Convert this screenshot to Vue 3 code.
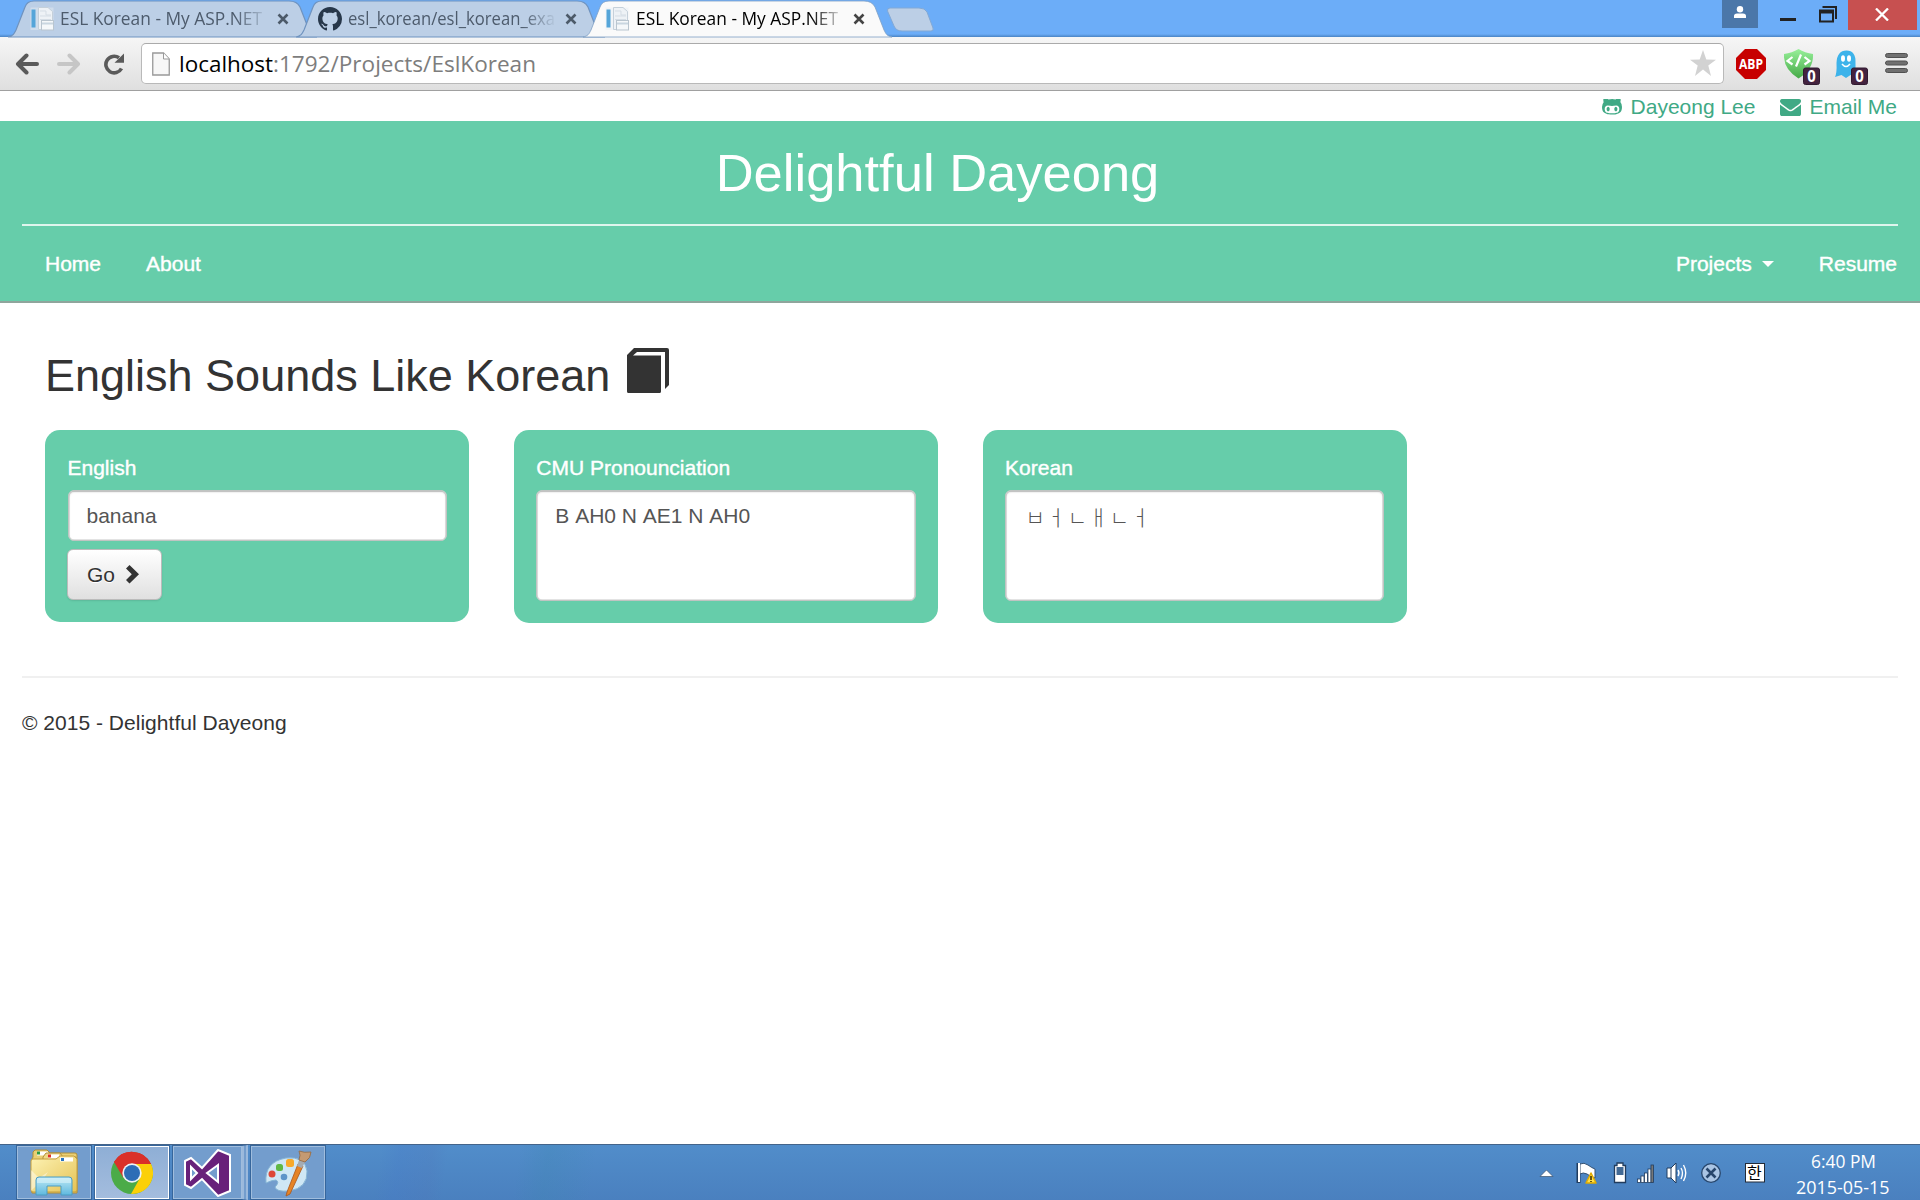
<script setup>
const tabs = [
  { title: 'ESL Korean - My ASP.NET', icon: 'page', active: false, width: 202 },
  { title: 'esl_korean/esl_korean_exa', icon: 'github', active: false, width: 207 },
  { title: 'ESL Korean - My ASP.NET', icon: 'page', active: true, width: 202 },
]
</script>

<template>
  <div class="screen">
    <div class="titlebar">
      <div class="tabs">
        <div v-for="(t, i) in tabs" :key="i" class="tab" :class="{ active: t.active }">
          <svg class="shape" width="310" height="38" viewBox="0 0 310 38">
            <path d="M0 37C5 36 6 34 8 30L17 7Q19 1 26 1H281Q289 1 292 7L301 30C303 34 304 36 309 37Z" />
          </svg>
          <svg v-if="t.icon === 'page'" class="fav" viewBox="0 0 24 24">
            <rect x="0.5" y="0.5" width="23" height="22.5" fill="#e6edf4" opacity=".45" />
            <rect x="1.5" y="2.5" width="4" height="18" fill="#55a5d9" />
            <path d="M8.500.5H18l4.500 4V22.500H8.500Z" fill="#eef2f6" stroke="#c5d0da" />
            <path d="M10 4h6v4h5M10 9h11M10 12.500h11" fill="none" stroke="#d5dde5" />
            <rect x="11.500" y="13.500" width="12" height="9.500" fill="#f5f8fa" stroke="#b9c5cf" />
            <path d="M12 16.500h11" stroke="#c9d6e0" stroke-width="2" />
          </svg>
          <svg v-else class="fav" viewBox="0 0 16 16">
            <path fill="#27374a" d="M8 0C3.580 0 0 3.580 0 8c0 3.540 2.290 6.530 5.470 7.590.4.070.55-.17.55-.38 0-.19-.01-.82-.01-1.490-2.010.37-2.530-.49-2.690-.94-.09-.23-.48-.94-.82-1.130-.28-.15-.68-.52-.01-.53.63-.01 1.080.58 1.230.82.72 1.210 1.870.87 2.330.66.07-.52.28-.87.51-1.070-1.780-.2-3.640-.89-3.640-3.950 0-.87.31-1.590.82-2.150-.08-.2-.36-1.020.08-2.120 0 0 .67-.21 2.200.82.64-.18 1.320-.27 2-.27s1.360.09 2 .27c1.530-1.040 2.200-.82 2.200-.82.44 1.100.16 1.920.08 2.120.51.56.82 1.270.82 2.150 0 3.070-1.870 3.750-3.650 3.950.29.25.54.73.54 1.480 0 1.070-.01 1.930-.01 2.200 0 .21.15.46.55.38A8.010 8.010 0 0016 8c0-4.420-3.580-8-8-8z" />
          </svg>
          <svg class="ttl" width="212" height="34">
            <text x="0" y="25" :textLength="t.width" lengthAdjust="spacingAndGlyphs">{{ t.title }}</text>
          </svg>
          <svg class="x" width="12" height="12"><path d="M1.500 1.500L10.500 10.500M10.500 1.500L1.500 10.500" /></svg>
        </div>
        <svg class="newtab" width="50" height="26" viewBox="0 0 50 26">
          <path d="M4 1H33Q39 1 41 5L47 21Q48 24 45 24H16Q10 24 8 19L1.500 4Q1 1 4 1Z" fill="#bccfe6" stroke="#82a9d6" />
        </svg>
      </div>
      <div class="controls">
        <div class="user">
          <svg width="14" height="13" viewBox="0 0 14 13"><circle cx="7" cy="3.200" r="3.200" fill="#fff" /><path d="M1 12V10Q1 7.500 4 7.500H10Q13 7.500 13 10V12Z" fill="#fff" /></svg>
        </div>
        <svg class="min" width="16" height="3"><rect width="16" height="3" fill="#222" /></svg>
        <svg class="restore" width="18" height="17" viewBox="0 0 18 17"><path d="M3.500 1H17V13" fill="none" stroke="#222" stroke-width="2" /><path d="M0 3.500H15V16.500H0ZM2 7.500V14.500H13V7.500Z" fill="#222" fill-rule="evenodd" /></svg>
        <div class="close"><svg width="14" height="13" viewBox="0 0 14 13"><path d="M1 .5L13 12.500M13 .5L1 12.500" stroke="#fff" stroke-width="2.300" /></svg></div>
      </div>
    </div>

    <div class="toolbar">
      <svg class="back" width="24" height="22" viewBox="0 0 24 22"><path d="M11.500 2.500L3 11L11.500 19.500M3.500 11H22" /></svg>
      <svg class="back fwd" width="24" height="22" viewBox="0 0 24 22"><path d="M12.500 2.500L21 11L12.500 19.500M20.500 11H2" /></svg>
      <svg class="reload" width="24" height="22" viewBox="0 0 24 22"><path d="M19.500 15.500A8.300 8.300 0 1 1 17 4.800" fill="none" stroke="#5a5a5a" stroke-width="3.600" /><path d="M22 0.500V9.700H12.500Z" fill="#5a5a5a" /></svg>
      <div class="omnibox">
        <svg class="doc" width="18" height="24" viewBox="0 0 18 24"><path d="M.75 1H11.500L17.250 7V23H.75Z" fill="#f7f7f7" stroke="#999" stroke-width="1.300" /><path d="M11.500 1V7H17" fill="#fff" stroke="#999" /></svg>
        <svg class="url" width="370" height="38">
          <text y="28" fill="#000" textLength="94" lengthAdjust="spacingAndGlyphs">localhost</text>
          <text x="94" y="28" fill="#7d7d7d" textLength="263" lengthAdjust="spacingAndGlyphs">:1792/Projects/EslKorean</text>
        </svg>
        <svg class="star" width="26" height="26" viewBox="0 0 26 26"><path d="M13 0L16.300 9.500L26 9.700L18.300 15.600L21 26L13 19.500L5 26L7.700 15.600L0 9.700L9.700 9.500Z" fill="#d2d2d2" /></svg>
      </div>
      <svg class="ext abp" width="30" height="30" viewBox="0 0 30 30"><path d="M9 0H21L30 9V21L21 30H9L0 21V9Z" fill="#c70000" /><text x="3" y="20" textLength="24" lengthAdjust="spacingAndGlyphs" font-size="14.500">ABP</text></svg>
      <svg class="ext shield" width="36" height="36" viewBox="0 0 36 36">
        <defs><linearGradient id="sg" x1="0" y1="0" x2="0" y2="1"><stop offset="0" stop-color="#98f09a" /><stop offset="1" stop-color="#45aa47" /></linearGradient></defs>
        <path d="M0 5Q8 4 14.500 0Q21 4 29 5Q30 20 14.500 29.500Q-1 20 0 5Z" fill="url(#sg)" />
        <path d="M8.500 8L3.500 12L8.500 15.500M20.500 8L25.500 12L20.500 15.500M17 5.500L12 17.500" fill="none" stroke="#fff" stroke-width="2.200" />
        <rect x="19.500" y="19" width="16" height="16.500" rx="2" fill="#43233f" stroke="#301a30" /><text x="23.300" y="33" textLength="8.500" lengthAdjust="spacingAndGlyphs" font-size="16">0</text>
      </svg>
      <svg class="ext ghost" width="33" height="36" viewBox="0 0 33 36">
        <path d="M1.500 14Q2 1.500 11.500 1.500T20.500 14V23Q20.500 27 22 28.500L15.500 26L11 29L6.500 26L0 28Q2 24 1.500 14Z" fill="#3db3ea" />
        <ellipse cx="8" cy="9.500" rx="2" ry="3.300" fill="#fff" /><ellipse cx="14" cy="9.500" rx="2" ry="3.300" fill="#fff" /><path d="M7 15Q11 20 15 15" fill="none" stroke="#fff" stroke-width="1.500" />
        <rect x="16.500" y="19" width="16" height="16.500" rx="2" fill="#43233f" stroke="#301a30" /><text x="20.300" y="33" textLength="8.500" lengthAdjust="spacingAndGlyphs" font-size="16">0</text>
      </svg>
      <svg class="ext menu" width="23" height="21" viewBox="0 0 23 21"><g fill="#707070" stroke="#505050"><rect x=".5" y=".5" width="22" height="4" rx="2" /><rect x=".5" y="8" width="22" height="4" rx="2" /><rect x=".5" y="15.500" width="22" height="4" rx="2" /></g></svg>
    </div>

    <div class="page">
      <div class="contact">
        <svg class="gh" width="20" height="17" viewBox="0 128 1664 1408" preserveAspectRatio="none"><path d="M640 960q0 40-12.500 82t-43 76-72.500 34-72.500-34-43-76-12.500-82 12.500-82 43-76 72.500-34 72.500 34 43 76 12.500 82zm640 0q0 40-12.500 82t-43 76-72.500 34-72.500-34-43-76-12.500-82 12.500-82 43-76 72.500-34 72.500 34 43 76 12.500 82zm160 0q0-120-69-204t-187-84q-41 0-195 21-71 11-157 11t-157-11q-152-21-195-21-118 0-187 84t-69 204q0 88 32 153.500t81 103 122 60 140 29.500 149 7h168q82 0 149-7t140-29.500 122-60 81-103 32-153.500zm224-176q0 207-61 331-38 77-105.500 133t-141 86-170 47.500-171.500 22-167 4.500q-78 0-142-3t-147.500-12.500-152.500-30-137-51.500-121-81-86-115q-62-123-62-331 0-237 136-396-27-82-27-170 0-116 51-218 108 0 190 39.500t189 123.500q147-35 309-35 148 0 280 32 105-82 187-121t189-39q51 102 51 218 0 87-27 168 136 160 136 398z" /></svg>
        <a>Dayeong Lee</a>
        <svg class="mail" width="21" height="17" viewBox="0 256 1792 1408" preserveAspectRatio="none"><path d="M1792 710v794q0 66-47 113t-113 47h-1472q-66 0-113-47t-47-113v-794q44 49 101 87 362 246 497 345 57 42 92.500 65.500t94.500 48 110 24.500h2q51 0 110-24.500t94.500-48 92.500-65.500q170-123 498-345 57-39 100-87zm0-294q0 79-49 151t-122 123q-376 261-468 325-10 7-42.500 31t-54 38.500-52 32.500-57.500 27-50 9h-2q-23 0-50-9t-57.500-27-52-32.500-54-38.500-42.500-31q-91-64-262-182.500t-205-142.500q-62-42-117-115.500t-55-136.500q0-78 41.500-130t118.500-52h1472q65 0 112.500 47t47.500 113z" /></svg>
        <a>Email Me</a>
      </div>
      <header class="banner">
        <h1>Delightful Dayeong</h1>
        <nav>
          <a>Home</a><a>About</a>
          <span class="grow"></span>
          <a>Projects<i class="caret"></i></a><a>Resume</a>
        </nav>
      </header>
      <main>
        <h2>English Sounds Like Korean
          <svg width="42" height="45" viewBox="0 0 42 45"><path d="M0 7L7 0H40Q42 0 42 2V37L38 41V4H10L6 7.500H34V43.500Q34 45 32.500 45H1.500Q0 45 0 43.500Z" fill="#333" /></svg>
        </h2>
        <div class="cards">
          <section class="card">
            <label>English</label>
            <div class="field single">banana</div>
            <button>Go <svg width="13" height="19" viewBox="0 0 13 19"><path d="M3.500 0L13 9.300L3.500 18.600L0 15.100L5.800 9.300L0 3.500Z" fill="#333" /></svg></button>
          </section>
          <section class="card">
            <label>CMU Pronounciation</label>
            <div class="field area">B AH0 N AE1 N AH0</div>
          </section>
          <section class="card">
            <label>Korean</label>
            <div class="field area jamo">ㅂㅓㄴㅐㄴㅓ</div>
          </section>
        </div>
      </main>
      <footer>© 2015 - Delightful Dayeong</footer>
    </div>

    <div class="taskbar">
      <div class="task">
        <svg width="48" height="48" viewBox="0 0 48 48">
          <defs>
            <linearGradient id="fy" x1="0" y1="0" x2="1" y2="1"><stop offset="0" stop-color="#fdf3b5" /><stop offset="1" stop-color="#e5c254" /></linearGradient>
            <linearGradient id="fb" x1="0" y1="0" x2="0" y2="1"><stop offset="0" stop-color="#bfe9f5" /><stop offset="1" stop-color="#5fb9df" /></linearGradient>
          </defs>
          <path d="M3 8V3L5 1H17L20 4H45Q47 4 47 6V44H2V10Z" fill="#e9cf74" stroke="#b08d36" />
          <rect x="7" y="2.500" width="11" height="4" fill="#fff" /><rect x="7" y="2.500" width="3" height="3" fill="#2d9a43" />
          <path d="M13 8L16 4H30L33 8H46V12H13Z" fill="#efd988" stroke="#b08d36" />
          <rect x="18" y="5.500" width="11" height="4" fill="#fff" /><rect x="18" y="5.500" width="3" height="3" fill="#dd3425" />
          <path d="M1 12Q1 10 3 10H26L30 7H44L47 10V41Q47 43 45 43H3Q1 43 1 41Z" fill="url(#fy)" stroke="#c59e3c" />
          <rect x="30" y="8.500" width="13" height="4" fill="#fff" /><rect x="31" y="9" width="3" height="3" fill="#2673c4" />
          <path d="M1 21L9 29L18 23L12 32L18 40L9 34L1 42V32Z" fill="#fff" opacity=".45" />
          <path d="M6 46V31Q6 28 9 28H39Q42 28 42 31V46H31V37H17V46Z" fill="url(#fb)" stroke="#4b9dc4" />
          <path d="M7 31Q7 29 9 29H39Q41 29 41 31V34H7Z" fill="#d9f4fa" opacity=".6" />
        </svg>
      </div>
      <div class="task on">
        <svg width="44" height="44" viewBox="0 0 44 44">
          <circle cx="22" cy="22" r="21" fill="#4bab48" />
          <path d="M22 22L4 11A21 21 0 0 1 41 13Z" fill="#da2f27" />
          <path d="M22 13H41A21 21 0 0 1 21 43L30 27Z" fill="#fbd008" />
          <path d="M4 11L13.500 27L22 13H41A21 21 0 0 0 4 11Z" fill="#da3029" />
          <circle cx="22" cy="22" r="9.700" fill="#eef2f6" /><circle cx="22" cy="22" r="8" fill="#2c6db6" />
        </svg>
      </div>
      <div class="task stacked">
        <svg width="48" height="48" viewBox="0 0 48 48"><path d="M1 12L7 9L18 19L34 1L46 6V42L34 47L18 30L7 39L1 36ZM7 18V30L13 24ZM34 16L23 24L34 33Z" fill="#68217a" fill-rule="evenodd" stroke="#fff" stroke-width="2" /></svg>
      </div>
      <div class="task">
        <svg width="48" height="48" viewBox="0 0 48 48">
          <path d="M2 34Q0 13 22 9Q41 7 43 22Q44 39 25 42Q12 43 11 38Q16 33 12 31Q8 31 2 34Z" fill="#cfe7f5" stroke="#86b5d5" />
          <circle cx="20" cy="28" r="3.300" fill="#5e94c9" />
          <circle cx="8" cy="25" r="3.500" fill="#de4837" /><rect x="12" y="15" width="7" height="7" rx="2.500" fill="#5fb845" /><rect x="22" y="10" width="8" height="8" rx="2.500" fill="#f7a92b" />
          <path d="M34 15L39 17L26 45L22 47L23 43Z" fill="#e58426" stroke="#a9551b" stroke-width=".8" />
          <path d="M35 11L41 13L38 19L33 17Z" fill="#a4abb2" />
          <path d="M35 11Q37 6 35 2Q40 4 47 3Q47 9 41 13Z" fill="#c59a72" stroke="#94683f" stroke-width=".8" />
        </svg>
      </div>
      <div class="tray">
        <svg width="290" height="55" viewBox="1535 1145 290 55">
          <path d="M1540 1176.500L1546.500 1170L1553 1176.500Z" fill="#fff" stroke="#39506c" stroke-width=".7" />
          <path d="M1578.500 1163V1183" stroke="#213c5e" stroke-width="4" /><path d="M1580 1164Q1584 1162 1588 1165Q1592 1168 1595 1169V1178Q1591 1177 1587 1174Q1583 1172 1580 1174Z" fill="#fff" stroke="#345173" /><path d="M1579 1163V1182" stroke="#fff" stroke-width="2" />
          <path d="M1591 1173L1596 1183H1586Z" fill="#ffe04b" stroke="#e0ab00" stroke-width="1.500" stroke-linejoin="round" /><path d="M1591 1176V1180M1591 1181V1182" stroke="#332800" stroke-width="1.500" />
          <path d="M1617 1163H1623V1165.500H1625.500V1182.500H1614.500V1165.500H1617Z" fill="#fff" stroke="#213c5e" stroke-width="1.300" /><rect x="1616.500" y="1167" width="7" height="8" fill="#426994" />
          <g fill="#fff" stroke="#213c5e" stroke-width=".8"><rect x="1637.500" y="1179" width="3" height="3.500" /><rect x="1641" y="1176" width="3" height="6.500" /><rect x="1644.500" y="1173" width="3" height="9.500" /><rect x="1648" y="1169" width="3" height="13.500" /><rect x="1651" y="1165" width="2.500" height="17.500" fill="#777" /></g>
          <path d="M1667 1168H1671L1676 1163V1183L1671 1178H1667Z" fill="#fff" stroke="#213c5e" /><path d="M1671 1168V1178" stroke="#213c5e" /><path d="M1678 1170Q1680 1173 1678 1176M1681 1168Q1684 1173 1681 1179M1683.500 1165Q1688 1173 1683.500 1181" fill="none" stroke="#fff" stroke-width="1.400" />
          <circle cx="1711" cy="1173" r="9.300" fill="#a9c4e4" stroke="#27466c" stroke-width="1.300" /><path d="M1706.500 1168.500L1715.500 1177.500M1715.500 1168.500L1706.500 1177.500" stroke="#27466c" stroke-width="2.600" />
          <rect x="1745.500" y="1163.500" width="19" height="18.500" fill="#fff" stroke="#222b38" /><text x="1747" y="1179" class="han">한</text>
        </svg>
        <svg class="clock" width="95" height="55">
          <text x="15" y="23" textLength="65" lengthAdjust="spacingAndGlyphs">6:40 PM</text>
          <text x="0" y="49" textLength="93.500" lengthAdjust="spacingAndGlyphs">2015-05-15</text>
        </svg>
      </div>
    </div>
  </div>
</template>

<style>
body { margin: 0; overflow: hidden; background: #fff; }
</style>

<style scoped>
* { box-sizing: border-box; }
svg { display: block; flex: none; }
.screen { width: 1920px; height: 1200px; display: flex; flex-direction: column; font-family: "Liberation Sans", Arial, sans-serif; font-size: 21px; line-height: 30px; color: #333; overflow: hidden; }
.titlebar { height: 37px; flex: none; display: flex; justify-content: space-between; background: linear-gradient(#6cadf8 34px, #4a84c4 37px); }
.tabs { display: flex; padding-left: 8px; }
.tab { position: relative; width: 308px; height: 37px; margin-right: -20.500px; display: flex; padding-left: 22px; }
.tab.active { z-index: 2; height: 38px; }
.shape { position: absolute; left: 0; top: 0; }
.shape path { fill: #bccfe6; stroke: #6f93bf; stroke-width: 1.200; }
.active .shape path { fill: #fafafa; stroke: #7f9fc4; stroke-width: .8; }
.fav { position: relative; width: 24px; height: 24px; margin-top: 7px; }
.ttl { position: relative; margin-left: 6px; font-family: "Open Sans", "Noto Sans", sans-serif; font-size: 17.500px; fill: #4d5b6c; font-weight: 400; -webkit-mask-image: linear-gradient(90deg, #000 175px, transparent 209px); mask-image: linear-gradient(90deg, #000 175px, transparent 209px); }
.active .ttl { fill: #000; margin-left: 7px; }
.x { position: relative; margin: 13px 0 0 5px; }
.x path { stroke: #4c5a69; stroke-width: 2.600; }
.active .x path { stroke: #444; }
.newtab { margin: 7px 0 0 15px; }
.controls { display: flex; padding-right: 3px; }
.user { width: 36px; height: 28px; background: #4b77a9; display: flex; justify-content: center; padding-top: 6px; }
.min { margin: 18px 0 0 22px; }
.restore { margin: 6px 0 0 23px; }
.close { width: 69px; height: 30px; margin-left: 11px; background: #c75050; display: flex; justify-content: center; padding: 8px 1px 0 0; }
.toolbar { height: 54px; flex: none; display: flex; background: linear-gradient(#f6f6f6, #dfdfdf); border-bottom: 1px solid #a0a0a0; padding-left: 15px; }
.back { margin-top: 16px; fill: none; stroke: #5a5a5a; stroke-width: 4; stroke-linecap: round; stroke-linejoin: round; }
.fwd { margin-left: 18px; stroke: #c6c6c6; }
.reload { margin: 16px 0 0 21px; }
.omnibox { width: 1583px; height: 41px; margin: 6px 0 0 15px; border: 1px solid #b9b9b9; border-top-color: #aaa; border-radius: 5px; background: #fff; display: flex; padding-left: 10px; }
.doc { margin-top: 8px; }
.url { margin-left: 9px; font-family: "Open Sans", "Noto Sans", sans-serif; font-size: 22.500px; }
.star { margin: 6px 7px 0 auto; }
.ext text { font-family: "Open Sans", sans-serif; font-weight: 700; fill: #fff; }
.abp { margin: 12px 0 0 12px; }
.shield { margin: 12px 0 0 18px; }
.ghost { margin: 12px 0 0 15px; }
.menu { margin: 16px 0 0 17px; }
.page { flex: 1; display: flex; flex-direction: column; }
.contact { height: 30px; flex: none; display: flex; justify-content: flex-end; padding: 1px 23px 0 0; color: #40a985; fill: #40a985; }
.contact svg { margin-top: 7px; }
.gh { margin-right: 9px; }
.mail { margin: 0 8px 0 25px; }
.banner { height: 182px; flex: none; background: #66cdaa; border-bottom: 2px solid #8fa59c; padding: 0 22px; }
h1 { margin: 0; height: 105px; border-bottom: 2px solid #dff5ed; padding-right: 3px; text-align: center; font-weight: 400; font-size: 52.500px; line-height: 104px; color: #fff; text-indent: -42px; }
nav { display: flex; padding: 23px 1px 0 23px; gap: 45px; color: #fff; -webkit-text-stroke: .4px #fff; }
.grow { flex: 1; }
.caret { display: inline-block; border: 6px solid transparent; border-top-color: #fff; border-bottom: 0; margin-left: 10px; vertical-align: 4px; }
main { padding: 0 45px; height: 373px; flex: none; }
h2 { margin: 0; height: 127px; padding-top: 45px; display: flex; gap: 17px; font-weight: 400; font-size: 45px; line-height: 56px; }
.cards { display: flex; gap: 44.500px; align-items: flex-start; }
.card { width: 424.300px; background: #66cdaa; border-radius: 15px; padding: 23px 22.500px 22.300px; display: flex; flex-direction: column; }
label { color: #fff; height: 37px; -webkit-text-stroke: .4px #fff; }
.field { background: #fff; border: 1px solid #c0c4c2; border-radius: 6px; box-shadow: inset 0 1px 2px rgba(0,0,0,.2), inset 0 0 0 .5px #ccc; color: #555; padding: 10px 18px; font-kerning: none; }
.single { height: 51px; }
.area { height: 111px; }
.jamo { font-family: "Noto Sans CJK KR", sans-serif; font-weight: 300; font-size: 21px; letter-spacing: 1.700px; padding-left: 19.500px; }
button { width: 95px; height: 51px; margin: 7.500px 0 0 -.5px; border: 1px solid #bbb; border-radius: 6px; background: linear-gradient(#fff, #e0e0e0); display: flex; gap: 11px; padding: 10px 0 0 19px; font: inherit; color: #333; text-shadow: 0 1px 0 #fff; box-shadow: 0 1px 2px rgba(0,0,0,.1); }
button svg { margin-top: 5px; }
footer { margin: 0 22px; border-top: 2px solid #f0f0f0; padding-top: 30px; letter-spacing: .02px; }
.taskbar { height: 56px; flex: none; border-top: 1px solid #44648a; display: flex; padding-left: 16px; gap: 2px; background: linear-gradient(98deg, transparent 19.800%, rgba(70,120,200,.25) 20.800%, rgba(80,115,185,.2) 22.500%, transparent 23.300%, transparent 27%, rgba(60,135,175,.25) 28.500%, transparent 31%), linear-gradient(#518dca, #4a80bf); }
.task { width: 76px; height: 55px; border: 1px solid #36669c; box-shadow: inset 0 0 0 1px #a0bddd; background: #739dcd; display: flex; justify-content: center; padding-top: 3px; }
.task.on { background: linear-gradient(#8eaed5, #a4bdde); box-shadow: inset 0 0 0 1px #fff; padding-top: 5px; }
.stacked { justify-content: flex-start; padding-left: 11px; border-right: 6px double #9bb9dc; }
.tray { margin-left: auto; display: flex; padding-right: 29px; }
.clock { margin-left: -29px; font-family: "Open Sans", sans-serif; font-size: 18px; fill: #fff; }
.han { font: 16px "Noto Sans CJK KR", sans-serif; fill: #000; }
</style>
